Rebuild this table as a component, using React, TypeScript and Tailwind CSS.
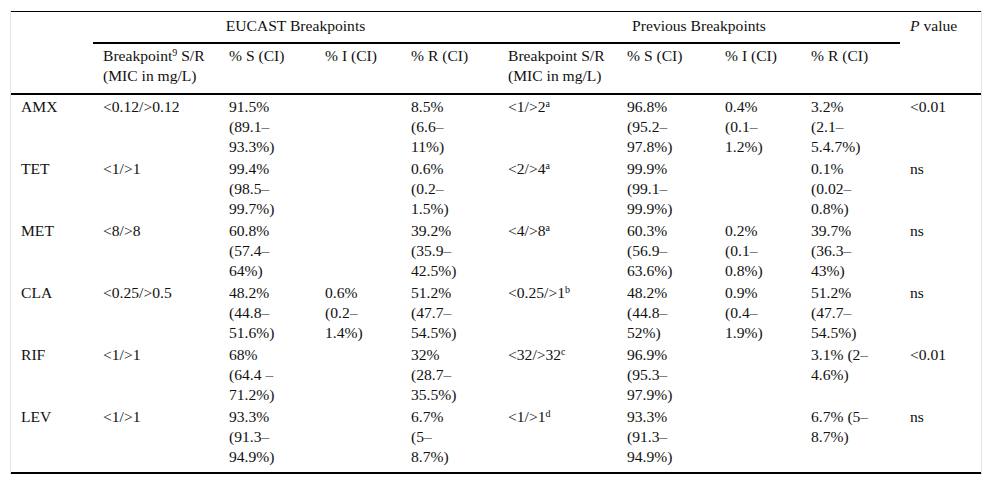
import React from 'react';

type Cell = React.ReactNode[];

interface Row {
    drug: string;
    cells: Cell[];
}

const Sup: React.FC<{ children: React.ReactNode }> = ({ children }) => <sup className="text-[10px]">{children}</sup>;

// each cell is split into the lines the reference shows
const rows: Row[] = [
    {
        drug: 'AMX',
        cells: [
            ['<0.12/>0.12'],
            ['91.5%', '(89.1–', '93.3%)'],
            [],
            ['8.5%', '(6.6–', '11%)'],
            [<>{'<1/>2'}<Sup>a</Sup></>],
            ['96.8%', '(95.2–', '97.8%)'],
            ['0.4%', '(0.1–', '1.2%)'],
            ['3.2%', '(2.1–', '5.4.7%)'],
            ['<0.01'],
        ],
    },
    {
        drug: 'TET',
        cells: [
            ['<1/>1'],
            ['99.4%', '(98.5–', '99.7%)'],
            [],
            ['0.6%', '(0.2–', '1.5%)'],
            [<>{'<2/>4'}<Sup>a</Sup></>],
            ['99.9%', '(99.1–', '99.9%)'],
            [],
            ['0.1%', '(0.02–', '0.8%)'],
            ['ns'],
        ],
    },
    {
        drug: 'MET',
        cells: [
            ['<8/>8'],
            ['60.8%', '(57.4–', '64%)'],
            [],
            ['39.2%', '(35.9–', '42.5%)'],
            [<>{'<4/>8'}<Sup>a</Sup></>],
            ['60.3%', '(56.9–', '63.6%)'],
            ['0.2%', '(0.1–', '0.8%)'],
            ['39.7%', '(36.3–', '43%)'],
            ['ns'],
        ],
    },
    {
        drug: 'CLA',
        cells: [
            ['<0.25/>0.5'],
            ['48.2%', '(44.8–', '51.6%)'],
            ['0.6%', '(0.2–', '1.4%)'],
            ['51.2%', '(47.7–', '54.5%)'],
            [<>{'<0.25/>1'}<Sup>b</Sup></>],
            ['48.2%', '(44.8–', '52%)'],
            ['0.9%', '(0.4–', '1.9%)'],
            ['51.2%', '(47.7–', '54.5%)'],
            ['ns'],
        ],
    },
    {
        drug: 'RIF',
        cells: [
            ['<1/>1'],
            ['68%', '(64.4 –', '71.2%)'],
            [],
            ['32%', '(28.7–', '35.5%)'],
            [<>{'<32/>32'}<Sup>c</Sup></>],
            ['96.9%', '(95.3–', '97.9%)'],
            [],
            ['3.1% (2–', '4.6%)'],
            ['<0.01'],
        ],
    },
    {
        drug: 'LEV',
        cells: [
            ['<1/>1'],
            ['93.3%', '(91.3–', '94.9%)'],
            [],
            ['6.7%', '(5–', '8.7%)'],
            [<>{'<1/>1'}<Sup>d</Sup></>],
            ['93.3%', '(91.3–', '94.9%)'],
            [],
            ['6.7% (5–', '8.7%)'],
            ['ns'],
        ],
    },
];

const widths = ['w-[82px]', 'w-[126px]', 'w-[96px]', 'w-[86px]', 'w-[97px]', 'w-[119px]', 'w-[98px]', 'w-[86px]', 'w-[99px]', 'w-[81px]'];

const Lines: React.FC<{ lines: Cell }> = ({ lines }) => (
    <>
        {lines.map((l, i) => (
            <div key={i}>{l}</div>
        ))}
    </>
);

const App: React.FC = () => {
    return (
        <div className="min-h-[485px] bg-white pl-[10px] pt-[11px] font-['Liberation_Serif','Times_New_Roman',serif] text-[15.6px] leading-5 text-[#111]">
            <div className="w-[972px] border-x border-[#e3e3e3]">
                <table className="w-full table-fixed border-collapse border-t border-b-2 border-black">
                    <colgroup>
                        {widths.map((w, i) => (
                            <col key={i} className={w} />
                        ))}
                    </colgroup>
                    <thead className="border-b-2 border-black">
                        <tr>
                            <th rowSpan={2} className="px-[10px] pt-[5px] align-top font-normal"></th>
                            <th colSpan={4} className="border-b-2 border-black px-[10px] pt-[4px] pb-[6px] text-center align-top font-normal">
                                EUCAST Breakpoints
                            </th>
                            <th colSpan={4} className="border-b-2 border-black px-[10px] pt-[4px] pb-[6px] text-center align-top font-normal">
                                Previous Breakpoints
                            </th>
                            <th rowSpan={2} className="px-[10px] pt-[4px] text-left align-top font-normal">
                                <i>P</i> value
                            </th>
                        </tr>
                        <tr>
                            <th className="px-[10px] pt-[2px] pb-[7px] text-left align-top font-normal">
                                <div>
                                    Breakpoint<Sup>9</Sup> S/R
                                </div>
                                <div>(MIC in mg/L)</div>
                            </th>
                            <th className="px-[10px] pt-[2px] pb-[7px] text-left align-top font-normal">% S (CI)</th>
                            <th className="px-[10px] pt-[2px] pb-[7px] text-left align-top font-normal">% I (CI)</th>
                            <th className="px-[10px] pt-[2px] pb-[7px] text-left align-top font-normal">% R (CI)</th>
                            <th className="px-[10px] pt-[2px] pb-[7px] text-left align-top font-normal">
                                <div>Breakpoint S/R</div>
                                <div>(MIC in mg/L)</div>
                            </th>
                            <th className="px-[10px] pt-[2px] pb-[7px] text-left align-top font-normal">% S (CI)</th>
                            <th className="px-[10px] pt-[2px] pb-[7px] text-left align-top font-normal">% I (CI)</th>
                            <th className="px-[10px] pt-[2px] pb-[7px] text-left align-top font-normal">% R (CI)</th>
                        </tr>
                    </thead>
                    <tbody>
                        {rows.map((r, ri) => {
                            const last = ri === rows.length - 1;
                            const pad = last ? 'pt-[2px] pb-[5px]' : 'pt-[2px] pb-0';
                            return (
                                <tr key={r.drug}>
                                    <td className={`px-[10px] align-top ${pad}`}>{r.drug}</td>
                                    {r.cells.map((c, ci) => (
                                        <td key={ci} className={`px-[10px] align-top ${pad}`}>
                                            <Lines lines={c} />
                                        </td>
                                    ))}
                                </tr>
                            );
                        })}
                    </tbody>
                </table>
            </div>
        </div>
    );
};

export default App;
